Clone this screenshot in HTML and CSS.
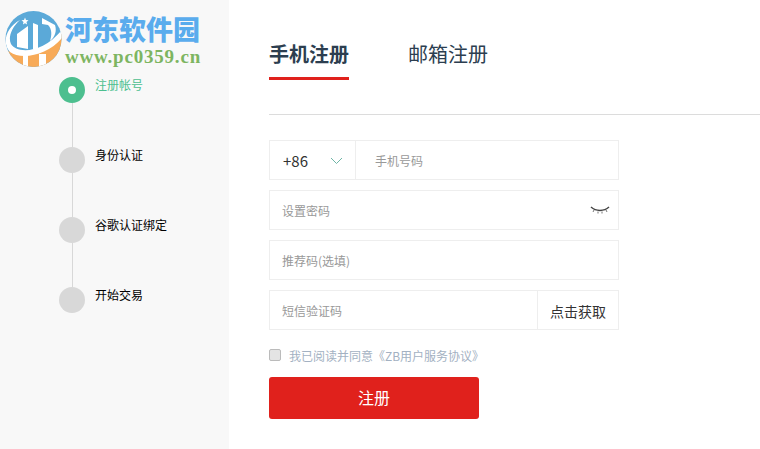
FILE: index.html
```html
<!DOCTYPE html>
<html lang="zh-CN">
<head>
<meta charset="utf-8">
<title>手机注册</title>
<link rel="stylesheet" href="styles.css">
</head>
<body>
<div class="page">
  <aside class="sidebar">
    <ol class="steps">
      <li class="step active"><span class="dot"></span><span class="label">注册帐号</span></li>
      <li class="step"><span class="dot"></span><span class="label">身份认证</span></li>
      <li class="step"><span class="dot"></span><span class="label">谷歌认证绑定</span></li>
      <li class="step"><span class="dot"></span><span class="label">开始交易</span></li>
    </ol>
  </aside>
  <main class="main">
    <nav class="tabs">
      <span class="tab current">手机注册</span>
      <span class="tab">邮箱注册</span>
    </nav>
    <form class="form">
      <div class="field">
        <div class="code"><span>+86</span>
          <svg class="chev" width="13" height="8" viewBox="0 0 13 8"><path d="M1 1l5.500 5.500L12 1" fill="none" stroke="#6fb5a6" stroke-width="1"/></svg>
        </div>
        <span class="ph phone">手机号码</span>
      </div>
      <div class="field">
        <span class="ph">设置密码</span>
        <svg class="eye" width="20" height="10" viewBox="0 0 20 10"><path d="M1 2C6 6.500 14 6.500 19 2" fill="none" stroke="#444" stroke-width="1.500"/><path d="M4 5L3 7M8 6.500V8.500M12 6.500V8.500M16 5l1 2" stroke="#777" stroke-width="1" fill="none"/></svg>
      </div>
      <div class="field"><span class="ph">推荐码(选填)</span></div>
      <div class="field">
        <span class="ph">短信验证码</span>
        <span class="send">点击获取</span>
      </div>
      <label class="agree"><span class="box"></span><span>我已阅读并同意《ZB用户服务协议》</span></label>
      <button class="submit" type="button">注册</button>
    </form>
  </main>
  <div class="logo">
    <svg class="mark" width="57" height="56" viewBox="0 0 57 56">
      <defs><clipPath id="disc"><circle cx="28.500" cy="28" r="28"/></clipPath></defs>
      <g clip-path="url(#disc)">
        <rect width="57" height="56" fill="#5ba9d8"/>
        <path d="M0 38C12 46 40 48 57 22V56H0Z" fill="#f7aa58"/>
        <path d="M15 9C6 17 3 27 6 33C11 42 36 44 57 19V27C42 45 16 49 5 41C-3 33 0 17 15 9Z" fill="#fff"/>
        <path d="M12 36V23L23 15V38ZM28 38V12L33 14V38Z" fill="#fff"/>
        <path d="M37 7L50 14C52 20 50 26 45 30C47 24 47 18 43 14L37 13Z" fill="#fff"/>
        <path d="M18 44H23V56H18ZM34 43H41V56H34Z" fill="#fff"/>
        <path d="M20 6.500l1 2.500 2.500.300-2 1.700.6 2.500-2.100-1.300-2.100 1.300.6-2.500-2-1.700 2.500-.300Z" fill="#fff"/>
      </g>
    </svg>
    <div class="brand">
      <span class="name">河东软件园</span>
      <span class="url">www.pc0359.cn</span>
    </div>
  </div>
</div>
</body>
</html>
```
FILE: styles.css
```css
* { box-sizing: border-box; }
html, body { margin: 0; padding: 0; }
body {
  background: #fff;
  font-family: "Noto Sans CJK SC", "Liberation Sans", sans-serif;
  overflow: hidden;
}
.page {
  position: relative;
  display: flex;
  width: 760px;
  height: 449px;
  overflow: hidden;
}
.sidebar {
  flex: 0 0 229px;
  background: #f8f8f8;
  padding: 77px 0 0 59px;
}
.steps { list-style: none; margin: 0; padding: 0; }
.step {
  position: relative;
  display: flex;
  gap: 10px;
  height: 70px;
}
.step:not(:last-child)::after {
  content: "";
  position: absolute;
  left: 13px;
  top: 26px;
  bottom: 0;
  width: 1px;
  background: #d8d8d8;
}
.dot {
  flex: 0 0 26px;
  height: 26px;
  border-radius: 50%;
  background: #d8d8d8;
}
.label {
  font-size: 12px;
  line-height: 16px;
  color: #000;
}
.step.active .dot {
  background: #4dbf8f;
  border: 9px solid #4dbf8f;
  background-clip: padding-box;
  background-color: #fff;
}
.step.active .label { color: #4dbf8f; }
.main {
  flex: 1;
  padding-left: 40px;
}
.tabs {
  display: flex;
  gap: 59px;
  height: 115px;
  padding-top: 40px;
  border-bottom: 1px solid #dcdcdc;
  align-items: flex-start;
}
.tab {
  font-size: 20px;
  line-height: 28px;
  color: #2c3e50;
  height: 40px;
}
.tab.current {
  font-weight: 700;
  border-bottom: 3px solid #e0211c;
}
.form {
  width: 350px;
  padding-top: 25px;
  display: flex;
  flex-direction: column;
  gap: 10px;
}
.field {
  display: flex;
  align-items: center;
  justify-content: space-between;
  height: 40px;
  border: 1px solid #eee;
  padding-left: 12px;
}
.field:first-child { padding-left: 0; justify-content: flex-start; }
.ph {
  font-size: 12px;
  color: #999;
  padding-top: 1px;
}
.ph.phone { padding-left: 19px; }
.code {
  display: flex;
  align-items: center;
  justify-content: space-between;
  width: 86px;
  height: 100%;
  padding: 0 12px 0 13px;
  border-right: 1px solid #eee;
  font-size: 15px;
  color: #333;
}
.chev { margin-top: 2px; }
.eye { margin-right: 8px; }
.send {
  width: 81px;
  height: 100%;
  border-left: 1px solid #eee;
  font-size: 14px;
  line-height: 40px;
  text-align: center;
  color: #333;
}
.agree {
  display: flex;
  align-items: center;
  gap: 8px;
  height: 30px;
  font-size: 12px;
  color: #a3b1c2;
}
.box {
  width: 12px;
  height: 12px;
  border: 1px solid #bbb;
  border-radius: 2px;
  background: #e4e4e4;
}
.submit {
  width: 210px;
  height: 42px;
  margin-top: -3px;
  border: 0;
  border-radius: 3px;
  background: #e0211c;
  color: #fff;
  font: 16px "Noto Sans CJK SC", sans-serif;
  padding: 0 0 2px;
}
.logo {
  position: absolute;
  left: 5px;
  top: 11px;
  display: flex;
  gap: 3px;
}
.brand {
  display: flex;
  flex-direction: column;
}
.name {
  font-size: 27px;
  line-height: 36px;
  font-weight: 900;
  color: #5aaced;
}
.url {
  font: 700 19px/20px "Liberation Serif", serif;
  color: #7db561;
  letter-spacing: .8px;
}
```
